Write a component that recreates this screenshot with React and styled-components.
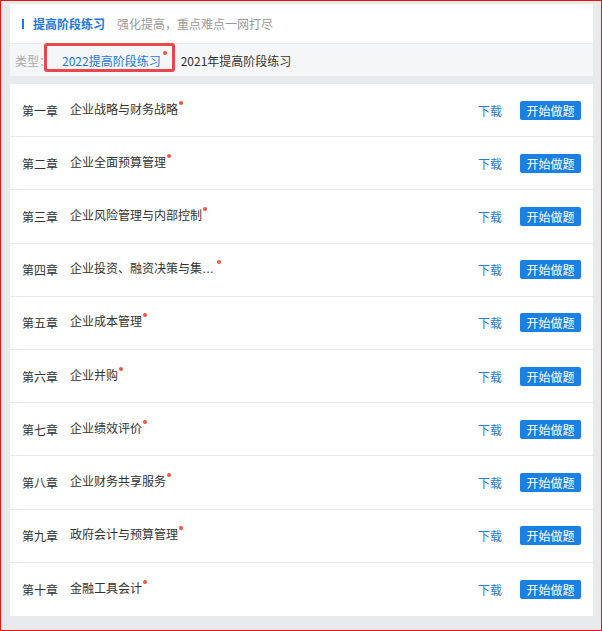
import React from "react"
import styled, { createGlobalStyle } from "styled-components"

const GlobalStyle = createGlobalStyle`
  html, body {
    margin: 0;
    padding: 0;
  }
  body {
    font-family: "Noto Sans CJK SC", "Noto Sans", sans-serif;
    font-size: 12px;
    color: #333;
  }
  * {
    box-sizing: border-box;
  }
`

const chapters = [
  { no: "第一章", title: "企业战略与财务战略" },
  { no: "第二章", title: "企业全面预算管理" },
  { no: "第三章", title: "企业风险管理与内部控制" },
  { no: "第四章", title: "企业投资、融资决策与集团管控" },
  { no: "第五章", title: "企业成本管理" },
  { no: "第六章", title: "企业并购" },
  { no: "第七章", title: "企业绩效评价" },
  { no: "第八章", title: "企业财务共享服务" },
  { no: "第九章", title: "政府会计与预算管理" },
  { no: "第十章", title: "金融工具会计" },
]

// Styles
const Page = styled.div`
  width: 602px;
  height: 631px;
  background: #e8eaed;
  border: 1px solid #f01010;
  padding: 3px 8px 0 9px;
  overflow: hidden;
`

const Header = styled.div`
  height: 39px;
  background: #ffffff;
  display: flex;
  align-items: center;
  padding-left: 12px;
  line-height: 17px;
`

const Bar = styled.span`
  width: 2px;
  height: 10px;
  background: #1a78e0;
  margin-right: 9px;
`

const HeaderTitle = styled.span`
  color: #1a78e0;
  font-weight: 700;
`

const HeaderSub = styled.span`
  color: #9a9a9a;
  margin-left: 12px;
`

const FilterRow = styled.div`
  position: relative;
  height: 33px;
  background: #f5f6f7;
  border-top: 1px solid #ececec;
  display: flex;
  align-items: center;
  padding-left: 5px;
  line-height: 17px;
`

const FilterLabel = styled.span`
  color: #aaaaaa;
  width: 36px;
`

const Tab = styled.span`
  position: relative;
  margin-left: ${(p) => (p.active ? "11px" : "0")};
  margin-right: ${(p) => (p.active ? "20px" : "0")};
  color: ${(p) => (p.active ? "#1a78e0" : "#333333")};
`

const Frame = styled.div`
  position: absolute;
  left: 34px;
  top: -1px;
  width: 131px;
  height: 29px;
  border: 3px solid #e8474d;
  border-radius: 3px;
  pointer-events: none;
`

const Dot = styled.i`
  position: absolute;
  right: ${(p) => p.right || -5}px;
  top: -1px;
  width: 4px;
  height: 4px;
  border-radius: 50%;
  background: #f5533d;
`

const List = styled.div`
  margin-top: 8px;
  background: #ffffff;
`

const Row = styled.div`
  height: 53.2px;
  display: flex;
  align-items: center;
  padding: 0 12px;
  line-height: 17px;
  border-bottom: 1px solid #ebebeb;
  &:last-child {
    border-bottom: none;
  }
`

const ChapterNo = styled.span`
  color: #333333;
  margin-right: 12px;
`

const TitleWrap = styled.span`
  display: inline-flex;
  flex: 1;
`

const TitleInner = styled.span`
  position: relative;
  display: inline-block;
`

const TitleText = styled.span`
  display: block;
  max-width: 146px;
  white-space: nowrap;
  overflow: hidden;
  text-overflow: ellipsis;
  font-family: "Liberation Sans", "Noto Sans CJK SC", sans-serif;
  color: #333333;
`

const Download = styled.a`
  color: #2a7ad8;
  text-decoration: none;
  margin-right: 18px;
  cursor: pointer;
`

const StartButton = styled.button`
  height: 19px;
  width: 61px;
  padding: 0;
  border: none;
  border-radius: 2px;
  background: #1a80e2;
  color: #ffffff;
  font-family: inherit;
  font-size: 12px;
  line-height: 19px;
  cursor: pointer;
`

const App = () => {
  return (
    <Page>
      <GlobalStyle />
      <Header>
        <Bar />
        <HeaderTitle>提高阶段练习</HeaderTitle>
        <HeaderSub>强化提高，重点难点一网打尽</HeaderSub>
      </Header>
      <FilterRow>
        <FilterLabel>类型：</FilterLabel>
        <Tab active>
          2022提高阶段练习
          <Dot right={-6} />
        </Tab>
        <Tab>2021年提高阶段练习</Tab>
        <Frame />
      </FilterRow>
      <List>
        {chapters.map((item, index) => (
          <Row key={index}>
            <ChapterNo>{item.no}</ChapterNo>
            <TitleWrap>
              <TitleInner>
                <TitleText>{item.title}</TitleText>
                <Dot />
              </TitleInner>
            </TitleWrap>
            <Download>下载</Download>
            <StartButton>开始做题</StartButton>
          </Row>
        ))}
      </List>
    </Page>
  )
}

export default App
